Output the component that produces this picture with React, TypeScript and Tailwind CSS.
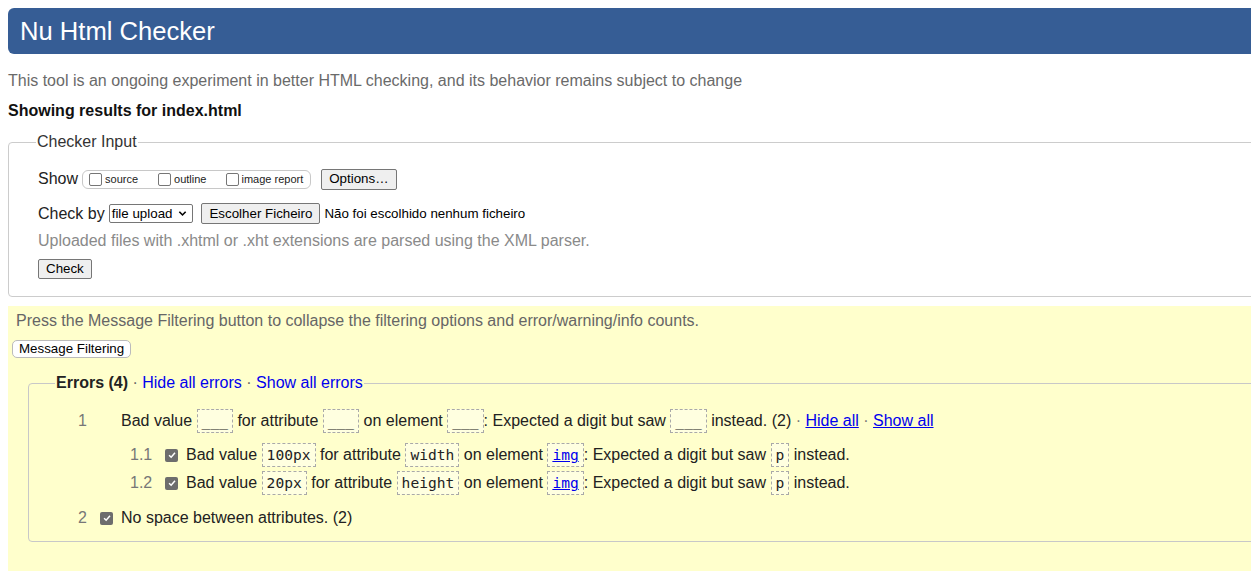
import { ReactNode } from "react";

const sans = { fontFamily: '"Liberation Sans", Arial, sans-serif' };

function Box({ children }: { children: ReactNode }) {
  return (
    <code className="inline-block border border-dashed border-[#a9a9a9] bg-[#ffffe0] px-[4px] align-middle font-['DejaVu_Sans_Mono',monospace] text-[14.6px] leading-[22px] text-[#222]">
      {children}
    </code>
  );
}

function Unchecked() {
  return (
    <span className="inline-block h-[13px] w-[13px] rounded-[2px] border border-[#767676] bg-white" />
  );
}

function Checked() {
  return (
    <span className="inline-flex h-[13px] w-[13px] items-center justify-center rounded-[2px] bg-[#6d6d6d]">
      <svg viewBox="0 0 12 12" width="10" height="10">
        <path d="M2.5 6.2 L5 8.6 L9.6 3.4" fill="none" stroke="#fff" strokeWidth="1.8" />
      </svg>
    </span>
  );
}

function Btn({ children, className = "" }: { children: ReactNode; className?: string }) {
  return (
    <span
      className={`inline-flex items-center rounded-[2px] border border-[#767676] bg-[#efefef] px-[7px] text-[13.33px] text-black ${className}`}
    >
      {children}
    </span>
  );
}

function SubRow({ n, value, attr }: { n: string; value: string; attr: string }) {
  return (
    <div className="flex h-[24px] items-center whitespace-pre pl-[52px]">
      <span className="w-[35px] text-[#777]">{n}</span>
      <span className="flex w-[21px]">
        <Checked />
      </span>
      <span>
        Bad value <Box>{value}</Box> for attribute <Box>{attr}</Box> on element{" "}
        <Box>
          <a className="text-[#0000ee] underline">img</a>
        </Box>
        : Expected a digit but saw <Box>p</Box> instead.
      </span>
    </div>
  );
}

export default function App() {
  return (
    <div className="min-h-[571px] w-full overflow-hidden bg-white text-[16px] text-[#222]" style={sans}>
      <div className="w-[1300px] pl-2">
        <div className="mt-2 flex h-[46px] items-center rounded-l-[6px] bg-[#365d95] pl-[12px] text-[25.6px] text-white">
          Nu Html Checker
        </div>

        <p className="mt-[18px] leading-[18px] text-[#6a6a6a]">
          This tool is an ongoing experiment in better HTML checking, and its behavior remains subject to change
        </p>
        <p className="mt-[12px] font-bold leading-[18px] text-[#111]">Showing results for index.html</p>

        <fieldset className="mt-[13px] rounded-[4px] border border-[#cccccc] pb-[17px] pl-[29px]">
          <legend className="-ml-[2px] px-[1px] leading-[18px] text-[#333]">Checker Input</legend>

          <div className="mt-[17px] flex h-[22px] items-center">
            <span className="mr-[4px]">Show</span>
            <span className="flex h-[19px] items-center rounded-[6px] border border-[#c8c8c8] pl-[6px] pr-[7px] text-[11px] text-[#222]">
              <Unchecked />
              <span className="ml-[3px] mr-[20px]">source</span>
              <Unchecked />
              <span className="ml-[3px] mr-[20px]">outline</span>
              <Unchecked />
              <span className="ml-[2px]">image report</span>
            </span>
            <Btn className="ml-[10px] h-[21px]">Options…</Btn>
          </div>

          <div className="mt-[13px] flex h-[21px] items-center">
            <span className="mr-[4px]">Check by</span>
            <span className="flex h-[19px] items-center rounded-[2px] border border-[#767676] bg-white pl-[2px] pr-[5px] text-[13.33px] text-black">
              file upload
              <svg viewBox="0 0 10 10" width="9" height="9" className="ml-[6px]">
                <path d="M1.5 3 L5 6.6 L8.5 3" fill="none" stroke="#000" strokeWidth="1.8" />
              </svg>
            </span>
            <Btn className="ml-[8px] h-[21px]">Escolher Ficheiro</Btn>
            <span className="ml-[4px] text-[13.33px] text-black">Não foi escolhido nenhum ficheiro</span>
          </div>

          <p className="mt-[8px] leading-[18px] text-[#8a8a8a]">
            Uploaded files with .xhtml or .xht extensions are parsed using the XML parser.
          </p>

          <div className="mt-[9px] flex">
            <Btn className="h-[20px]">Check</Btn>
          </div>
        </fieldset>

        <div className="mt-[9px] min-h-[270px] bg-[#ffffcc] px-2 pt-[6px]">
          <p className="leading-[18px] text-[#666]">
            Press the Message Filtering button to collapse the filtering options and error/warning/info counts.
          </p>
          <div className="mt-[10px] flex">
            <span className="-ml-[4px] inline-flex h-[18px] items-center rounded-[5px] border border-[#bbb] bg-white px-[6px] text-[13.33px] text-black">
              Message Filtering
            </span>
          </div>

          <fieldset className="ml-[12px] mt-[16px] rounded-[4px] border border-[#c8c8c8] pb-[14px] pl-[27px]">
            <legend className="-ml-[1px] px-[1px] leading-[18px]">
              <b className="text-[#222]">Errors (4)</b>
              <span className="text-[#666]"> · </span>
              <a className="text-[#0000ee]">Hide all errors</a>
              <span className="text-[#666]"> · </span>
              <a className="text-[#0000ee]">Show all errors</a>
            </legend>

            <div className="ml-[22px]">
              <div className="mt-[17px] flex h-[24px] items-center whitespace-pre">
                <span className="w-[43px] text-[#777]">1</span>
                <span>
                  Bad value <Box>___</Box> for attribute <Box>___</Box> on element <Box>___</Box>: Expected a digit
                  but saw <Box>___</Box> instead. (2) <span className="text-[#777]">·</span>{" "}
                  <a className="text-[#0000ee] underline">Hide all</a> <span className="text-[#777]">·</span>{" "}
                  <a className="text-[#0000ee] underline">Show all</a>
                </span>
              </div>

              <div className="mt-[10px] flex flex-col gap-[4px]">
                <SubRow n="1.1" value="100px" attr="width" />
                <SubRow n="1.2" value="20px" attr="height" />
              </div>

              <div className="mt-[14px] flex h-[18px] items-center">
                <span className="w-[22px] text-[#777]">2</span>
                <span className="flex w-[21px]">
                  <Checked />
                </span>
                <span>No space between attributes. (2)</span>
              </div>
            </div>
          </fieldset>
        </div>
      </div>
    </div>
  );
}
